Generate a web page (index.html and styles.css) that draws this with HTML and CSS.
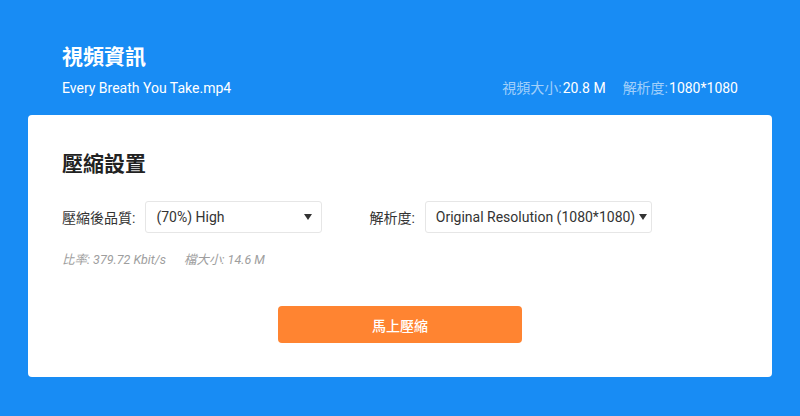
FILE: index.html
```html
<!DOCTYPE html>
<html lang="zh-Hant">
<head>
<meta charset="utf-8">
<title>視頻資訊</title>
<link rel="stylesheet" href="styles.css">
</head>
<body>
<div class="page">
  <header class="header">
    <h1 class="title">視頻資訊</h1>
    <div class="info-row">
      <span class="filename">Every Breath You Take.mp4</span>
      <div class="stats">
        <span class="stat"><span class="stat-label">視頻大小:</span>20.8 M</span>
        <span class="stat"><span class="stat-label">解析度:</span>1080*1080</span>
      </div>
    </div>
  </header>
  <section class="card">
    <h2 class="card-title">壓縮設置</h2>
    <div class="form-row">
      <div class="field">
        <span class="field-label">壓縮後品質:</span>
        <div class="select select-quality">
          <span class="select-text">(70%) High</span>
          <svg class="arrow" width="8" height="6" viewBox="0 0 8 6"><path d="M0 0H8L4 6Z" fill="#333"/></svg>
        </div>
      </div>
      <div class="field">
        <span class="field-label">解析度:</span>
        <div class="select select-res">
          <span class="select-text">Original Resolution (1080*1080)</span>
          <svg class="arrow" width="8" height="6" viewBox="0 0 8 6"><path d="M0 0H8L4 6Z" fill="#333"/></svg>
        </div>
      </div>
    </div>
    <div class="meta">
      <span>比率: 379.72 Kbit/s</span>
      <span>檔大小: 14.6 M</span>
    </div>
    <div class="actions">
      <button class="btn">馬上壓縮</button>
    </div>
  </section>
</div>
</body>
</html>
```
FILE: styles.css
```css
html, body {
  margin: 0;
  padding: 0;
}
body {
  background: #188cf4;
  font-family: Roboto, "Noto Sans CJK TC", sans-serif;
  width: 800px;
  height: 416px;
  overflow: hidden;
}
.page {
  padding-top: 43px;
}
.header {
  padding: 0 62px;
  color: #fff;
}
.title {
  margin: 0;
  font-size: 21px;
  line-height: 28px;
  font-weight: 700;
}
.info-row {
  margin-top: 7px;
  display: flex;
  justify-content: space-between;
  align-items: center;
  font-size: 14px;
  line-height: 20px;
}
.stats {
  display: flex;
  gap: 17px;
}
.stat-label {
  color: rgba(255, 255, 255, 0.6);
  margin-right: 1px;
}
.card {
  margin: 17px 28px 0;
  background: #fff;
  border-radius: 4px;
  padding: 35px 34px 34px;
}
.card-title {
  margin: 0;
  font-size: 21px;
  line-height: 28px;
  font-weight: 700;
  color: #222;
}
.form-row {
  margin-top: 23px;
  display: flex;
  gap: 47px;
}
.field {
  display: flex;
  align-items: center;
  gap: 10px;
}
.field-label {
  font-size: 14px;
  color: #333;
}
.select {
  box-sizing: border-box;
  height: 32px;
  border: 1px solid #e6e6e6;
  border-radius: 3px;
  display: flex;
  align-items: center;
  justify-content: space-between;
  gap: 4px;
  padding: 0 9px 0 10px;
  font-size: 14px;
  color: #333;
  white-space: nowrap;
}
.select-quality {
  width: 177px;
}
.select-res {
  width: 227px;
}
.arrow {
  flex: none;
}
.meta {
  margin-top: 19px;
  display: flex;
  gap: 18px;
  font-size: 12.5px;
  line-height: 16px;
  font-style: italic;
  color: #9e9e9e;
}
.actions {
  margin-top: 38px;
  display: flex;
  justify-content: center;
}
.btn {
  width: 244px;
  height: 37px;
  border: none;
  border-radius: 4px;
  background: #ff8431;
  color: #fff;
  font-family: Roboto, "Noto Sans CJK TC", sans-serif;
  font-size: 14px;
  font-weight: 500;
}
```
